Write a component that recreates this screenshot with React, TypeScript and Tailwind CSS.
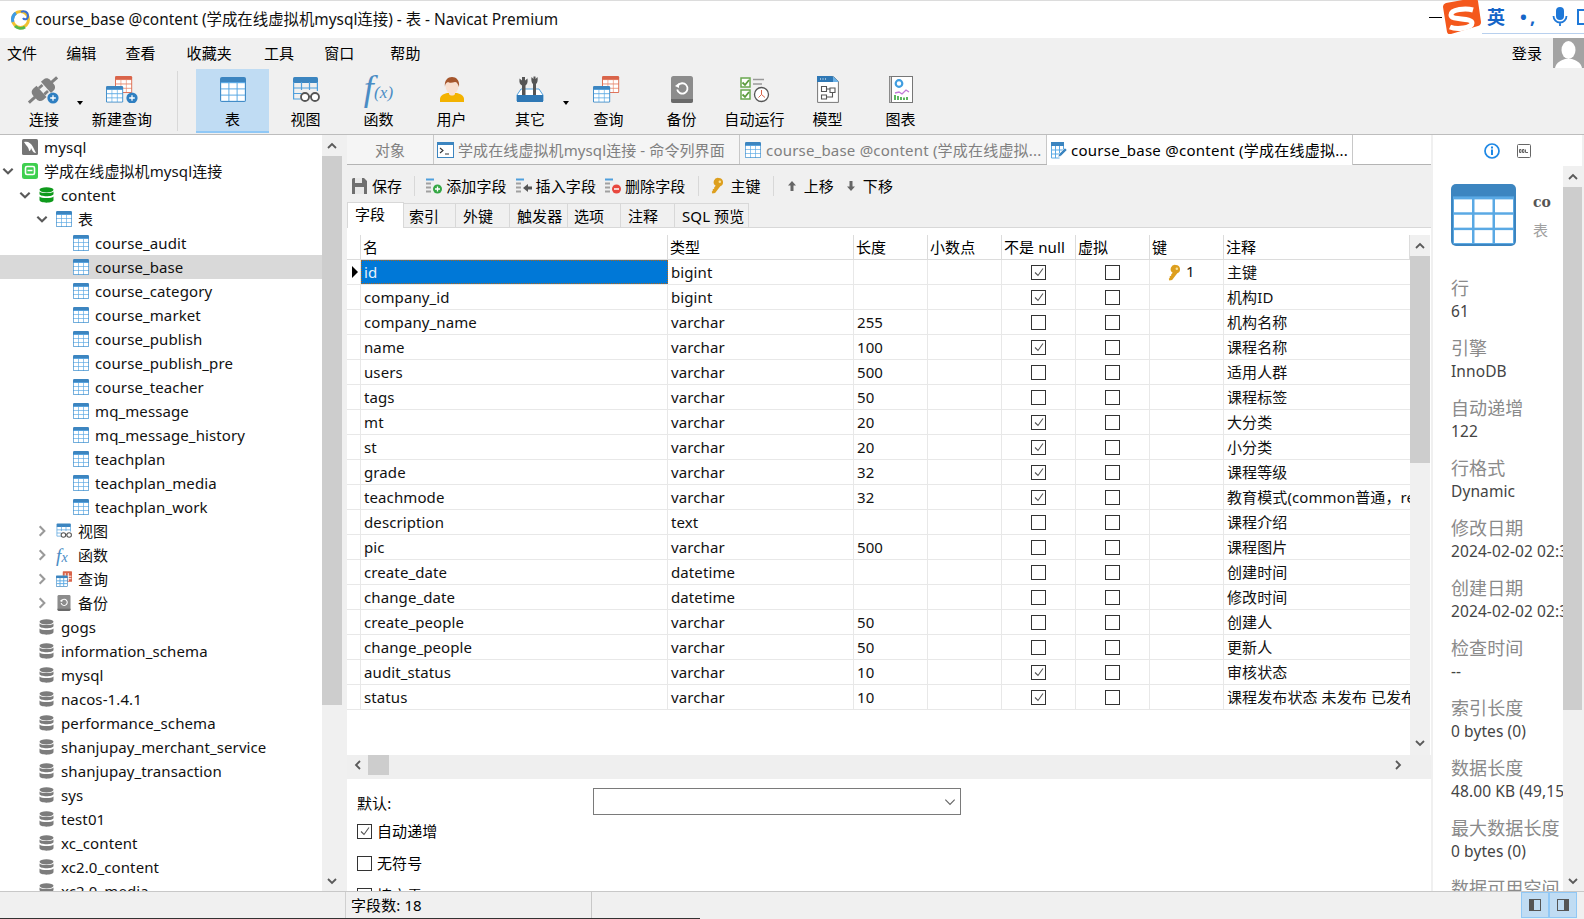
import type { ReactNode } from "react";

function TableIcon({ className = "w-4 h-4", main = "#3c85c0", line = "#5aa9e4" }: { className?: string; main?: string; line?: string }) {
	const xs = [1.2, 9.4, 17.6];
	const ys = [6.2, 12.4, 18.6];
	return (
		<svg viewBox="0 0 26 25" className={className} preserveAspectRatio="none">
			<rect x="0" y="0" width="26" height="25" rx="2" fill={main} />
			<rect x="0.8" y="5" width="24.4" height="19.2" fill={line} />
			{xs.map((x) =>
				ys.map((y) => <rect key={`${x}-${y}`} x={x} y={y} width="7.2" height="5.2" fill="#fff" />),
			)}
		</svg>
	);
}

function Plus({ cx, cy, r }: { cx: number; cy: number; r: number }) {
	return (
		<g>
			<circle cx={cx} cy={cy} r={r} fill="#2f7fc1" />
			<path d={`M${cx - r / 2} ${cy}H${cx + r / 2}M${cx} ${cy - r / 2}V${cy + r / 2}`} stroke="#fff" strokeWidth="1.3" />
		</g>
	);
}

function PlugIcon() {
	return (
		<svg width="34" height="28" viewBox="0 0 34 28">
			<g fill="#808080" transform="rotate(-42 16 14)">
				<rect x="-3" y="12.500" width="9" height="3" />
				<path d="M5 11c0-2.500 2-4.500 4.500-4.500H14v15H9.500C7 21.500 5 19.500 5 17z" />
				<rect x="14" y="8.500" width="5" height="2.800" />
				<rect x="14" y="16.700" width="5" height="2.800" />
				<path d="M20 6.500h3.500C26 6.500 28 8.500 28 11v6c0 2.500-2 4.500-4.500 4.500H20z" />
				<rect x="27" y="12.500" width="8" height="3" />
			</g>
			<Plus cx={26} cy={22} r={5.6} />
		</svg>
	);
}

function QueryIcon({ plus = false }: { plus?: boolean }) {
	return (
		<svg width="36" height="27" viewBox="0 0 36 27">
			<g transform="translate(11 0) scale(0.66 0.68)">
				<rect width="26" height="25" rx="2" fill="#d9644a" />
				<rect x="1" y="5" width="24" height="19" fill="#e88a70" />
				{[1.5, 9.5, 17.5].map((x) =>
					[6, 12.4, 18.6].map((y) => <rect key={`${x}-${y}`} x={x} y={y} width="7" height="5" fill="#fff" />),
				)}
			</g>
			<g transform="translate(2 10) scale(0.66 0.66)">
				<rect width="26" height="25" rx="2" fill="#3c85c0" />
				<rect x="1" y="5" width="24" height="19" fill="#5aa9e4" />
				{[1.5, 9.5, 17.5].map((x) =>
					[6, 12.4, 18.6].map((y) => <rect key={`${x}-${y}`} x={x} y={y} width="7" height="5" fill="#fff" />),
				)}
			</g>
			{plus && <Plus cx={28} cy={22} r={5.6} />}
		</svg>
	);
}

function ViewIcon({ className = "" }: { className?: string }) {
	return (
		<svg viewBox="0 0 28 26" className={className}>
			<rect x="1" y="0" width="25" height="6" rx="1.5" fill="#3c85c0" />
			<path d="M1.6 5v17h7M25.4 5v9M1.6 11h24M1.6 16.5h8M9.5 5v8M17.5 5v8" stroke="#4f9fdc" strokeWidth="1.2" fill="none" />
			<circle cx="13" cy="20" r="4" fill="#fff" stroke="#555" strokeWidth="1.8" />
			<circle cx="23" cy="20" r="4" fill="#fff" stroke="#555" strokeWidth="1.8" />
			<path d="M16.8 19.5h2.4" stroke="#555" strokeWidth="1.6" />
		</svg>
	);
}

function FxIcon() {
	return (
		<div className="h-[27px] flex items-end text-[#4a8cc4] font-['Liberation_Serif',serif] italic leading-none">
			<span className="text-[36px] leading-[30px]">f</span>
			<span className="text-[17px] mb-[2px]">(x)</span>
		</div>
	);
}

function UserIcon() {
	return (
		<svg width="26" height="27" viewBox="0 0 26 27">
			<path d="M1 26v-3c0-3 3-5 7-6h10c4 1 7 3 7 6v3z" fill="#f3b200" />
			<path d="M10 15h6v3c-1 2-5 2-6 0z" fill="#f8e0cf" />
			<ellipse cx="13" cy="10" rx="6.5" ry="8" fill="#f8dfcf" />
			<path d="M6 11C5 4 9 1 13 1s8 3 7 10c-1-3-2-5-4-5-3 1-6 1-7 0-2 1-3 2-3 5z" fill="#a5562c" />
		</svg>
	);
}

function ToolsIcon() {
	return (
		<svg width="28" height="27" viewBox="0 0 28 27">
			<path d="M1 25v-6l4-6h18l4 6v6z" fill="#fff" stroke="#4f9fdc" />
			<path d="M6 20V9.500C4 8.500 3 6.500 3.500 2.500L6 4.500V1h3v3.500l2.500-2C12 6.500 11 8.500 9.500 9.500V20z" fill="#555" />
			<path d="M17 20V8c-1.500-1-2-4-1.500-7l2 2V.5h2V3l2-2c.5 3 0 6-1.500 7v12z" fill="#555" />
			<rect x="1" y="19" width="26" height="7" fill="#2f78b5" />
		</svg>
	);
}

function BackupIcon({ className = "" }: { className?: string }) {
	return (
		<svg viewBox="0 0 22 27" className={className}>
			<rect width="22" height="27" rx="2.500" fill="#8c8c8c" />
			<path d="M0 23h22v1.500a2.500 2.500 0 0 1-2.500 2.500h-17A2.500 2.500 0 0 1 0 24.500z" fill="#6a6a6a" />
			<path d="M7 9.500a5.200 5.200 0 1 1-.8 4" fill="none" stroke="#fff" strokeWidth="1.800" />
			<path d="M4 10l4 -3v5z" fill="#fff" />
		</svg>
	);
}

function AutoRunIcon() {
	return (
		<svg width="30" height="27" viewBox="0 0 30 27">
			{[2, 14].map((y) => (
				<g key={y}>
					<rect x="1" y={y} width="9" height="9" fill="#fff" stroke="#6aa84f" strokeWidth="1.500" />
					<path d={`M2.500 ${y + 4.5}l2.500 2.500 4-5`} stroke="#5d9c3f" strokeWidth="1.800" fill="none" />
				</g>
			))}
			<path d="M13 3.500h11M13 8h9" stroke="#999" strokeWidth="1.600" />
			<circle cx="21.500" cy="18.500" r="7" fill="#fff" stroke="#555" strokeWidth="1.300" />
			<path d="M21.500 18.500V14M21.500 18.500l3.500 3M21.500 18.500l-3 3" stroke="#d9644a" strokeWidth="1" />
		</svg>
	);
}

function ModelIcon() {
	return (
		<svg width="22" height="27" viewBox="0 0 22 27">
			<path d="M.6.600h16l4.800 4.800v21H.6z" fill="#fff" stroke="#777" />
			<path d="M0 0h15l6 6H0z" fill="#2f78b5" />
			<path d="M16 0l6 6h-6z" fill="#6cb2e8" />
			<path d="M3 3h1M5.500 3h1M8 3h1" stroke="#fff" strokeWidth="1.200" />
			<path d="M4.500 10.500h5v5h-5zM13 12h5v4.500h-5zM4.500 19h5v4h-5zM9.500 13h3.500M9.500 21h6v-4.500" fill="none" stroke="#555" strokeWidth="1.100" />
		</svg>
	);
}

function ChartIcon() {
	return (
		<svg width="24" height="27" viewBox="0 0 24 27">
			<rect x=".5" y=".5" width="2.500" height="26" fill="#ccc" stroke="#777" strokeWidth=".8" />
			<rect x="2.500" y=".5" width="21" height="26" fill="#fff" stroke="#777" />
			<circle cx="10" cy="7.500" r="3.300" fill="none" stroke="#3f9de0" strokeWidth="2.200" />
			<path d="M6 17l4-1 3 2 4-4 3 2" fill="none" stroke="#c07ad8" strokeWidth="1.300" />
			<path d="M6 24v-5M9 24v-4M12 24v-3M15 24v-2.500M18 24v-3" stroke="#4caf50" strokeWidth="1.800" />
		</svg>
	);
}

function Caret({ className = "" }: { className?: string }) {
	return <span className={`absolute w-0 h-0 border-x-[3px] border-x-transparent border-t-[4px] border-t-black ${className}`} />;
}

function ToolButton({ label, icon, width = "w-[73px]", active = false, children }: { label: string; icon: ReactNode; width?: string; active?: boolean; children?: ReactNode }) {
	return (
		<div className={`relative flex flex-col items-center mt-px pt-[7px] h-[64px] shrink-0 ${width} ${active ? "bg-[#c0dcf3] border-b-2 border-[#90c8f6]" : ""}`}>
			<div className="h-[27px] flex items-center justify-center">{icon}</div>
			<div className="h-5 mt-[6px] leading-5 whitespace-nowrap text-black">{label}</div>
			{children}
		</div>
	);
}

function Chevron({ dir, className = "w-3 h-3", color = "#5a5a5a", weight = "1.800" }: { dir: "up" | "down" | "left" | "right"; className?: string; color?: string; weight?: string }) {
	const d = {
		up: "M2 8l4-4 4 4",
		down: "M2 4l4 4 4-4",
		left: "M8 2L4 6l4 4",
		right: "M4 2l4 4-4 4",
	}[dir];
	return (
		<svg viewBox="0 0 12 12" className={className}>
			<path d={d} fill="none" stroke={color} strokeWidth={weight} />
		</svg>
	);
}

function VScroll({ thumb, width = "w-5", bottom = "h-[21px]" }: { thumb: string; width?: string; bottom?: string }) {
	return (
		<div className={`flex flex-col shrink-0 bg-[#f0f0f0] ${width}`}>
			<div className="h-[21px] flex items-center justify-center shrink-0">
				<Chevron dir="up" />
			</div>
			<div className={`bg-[#cdcdcd] shrink-0 ${thumb}`} />
			<div className="flex-1" />
			<div className={`flex items-center justify-center shrink-0 ${bottom}`}>
				<Chevron dir="down" />
			</div>
		</div>
	);
}

function DbIcon({ color = "#7c7c7c" }: { color?: string }) {
	return (
		<svg width="15" height="16" viewBox="0 0 15 16">
			<ellipse cx="7.500" cy="2.800" rx="7" ry="2.600" fill={color} />
			<path d="M.5 4.500c1.500 2 12.500 2 14 0v2.500c0 3-14 3-14 0z" fill={color} />
			<path d="M.5 9.500c1.500 2 12.500 2 14 0V13c0 3.500-14 3.500-14 0z" fill={color} />
		</svg>
	);
}

function TreeRow({ level, open, icon, label, selected = false }: { level: 0 | 1 | 2 | 3; open?: boolean; icon: ReactNode; label: string; selected?: boolean }) {
	const indent = ["pl-0", "pl-[17px]", "pl-[34px]", "pl-[51px]"][level];
	return (
		<div className={`h-6 shrink-0 flex items-center whitespace-nowrap ${indent} ${selected ? "bg-[#d9d9d9]" : ""}`}>
			<div className="w-4 flex justify-center shrink-0">
				{open === true && <Chevron dir="down" className="w-[14px] h-[14px]" />}
				{open === false && <Chevron dir="right" className="w-[14px] h-[14px]" color="#9a9a9a" />}
			</div>
			<div className="w-[22px] ml-[6px] shrink-0 flex items-center">{icon}</div>
			<span className="text-[#111]">{label}</span>
		</div>
	);
}

const tableNames = ["course_audit", "course_base", "course_category", "course_market", "course_publish", "course_publish_pre", "course_teacher", "mq_message", "mq_message_history", "teachplan", "teachplan_media", "teachplan_work"];
const databases = ["gogs", "information_schema", "mysql", "nacos-1.4.1", "performance_schema", "shanjupay_merchant_service", "shanjupay_transaction", "sys", "test01", "xc_content", "xc2.0_content", "xc2.0_media"];

function Tree() {
	return (
		<div className="flex w-[342px] shrink-0 bg-white">
			<div className="w-[322px] flex flex-col overflow-hidden">
				<TreeRow
					level={0}
					label="mysql"
					icon={
						<svg width="16" height="16" viewBox="0 0 16 16">
							<rect width="16" height="16" rx="1.500" fill="#757575" />
							<path d="M2 3c4-1 7 1 9 5l3 6c-2 0-3-1-4-3L9 9c0 2-1 3-2 3 0-2-1-4-3-6z" fill="#fff" />
						</svg>
					}
				/>
				<TreeRow
					level={0}
					open
					label="学成在线虚拟机mysql连接"
					icon={
						<svg width="16" height="16" viewBox="0 0 16 16">
							<rect width="16" height="16" rx="2.500" fill="#3ecf4f" />
							<rect x="3.500" y="3.500" width="9" height="8" rx="1.500" fill="none" stroke="#fff" strokeWidth="1.600" />
							<path d="M5.500 7.500h5" stroke="#fff" strokeWidth="1.500" />
						</svg>
					}
				/>
				<TreeRow level={1} open label="content" icon={<DbIcon color="#0f9a1c" />} />
				<TreeRow level={2} open label="表" icon={<TableIcon />} />
				{tableNames.map((name) => (
					<TreeRow key={name} level={3} label={name} icon={<TableIcon />} selected={name === "course_base"} />
				))}
				<TreeRow level={2} open={false} label="视图" icon={<ViewIcon className="w-4 h-4" />} />
				<TreeRow
					level={2}
					open={false}
					label="函数"
					icon={
						<span className="text-[#4a8cc4] font-['Liberation_Serif',serif] italic text-[19px] leading-none">
							f<span className="text-[14px]">x</span>
						</span>
					}
				/>
				<TreeRow
					level={2}
					open={false}
					label="查询"
					icon={
						<span className="w-4 h-4 flex">
							<svg viewBox="0 0 26 25" className="w-4 h-4">
								<rect x="11" y="0" width="15" height="17" rx="1" fill="#d9644a" />
								<path d="M15 3v13M20 3v13M12 8h13M12 12h13" stroke="#fff" strokeWidth="1.500" />
								<rect x="0" y="7" width="19" height="18" rx="1" fill="#3c85c0" />
								<rect x="1" y="11" width="17" height="13" fill="#fff" />
								<path d="M6.500 11v13M12.500 11v13M1 15.500h17M1 20h17" stroke="#5aa9e4" strokeWidth="1.500" />
							</svg>
						</span>
					}
				/>
				<TreeRow level={2} open={false} label="备份" icon={<BackupIcon className="w-[14px] h-4 ml-px" />} />
				{databases.map((name, i) => (
					<TreeRow key={name + i} level={1} label={name} icon={<DbIcon />} />
				))}
			</div>
			<VScroll thumb="h-[549px]" />
		</div>
	);
}

function FieldLines({ children }: { children: ReactNode }) {
	return (
		<svg width="17" height="16" viewBox="0 0 17 16">
			<path d="M0 1.500h8" stroke="#4f9fdc" strokeWidth="2" />
			<path d="M0 5.500h5M0 9.500h5M0 13.500h5" stroke="#a0a0a0" strokeWidth="2" />
			{children}
		</svg>
	);
}

function KeyIcon({ className = "" }: { className?: string }) {
	return (
		<svg viewBox="0 0 14 18" className={className}>
			<path d="M9 1a4.500 4.500 0 0 1 1.500 8.700L5 17l-3 .5-.5-2 1-1 0-1.500 1.500-.5 0-1.500 1.600-1.800A4.500 4.500 0 0 1 9 1z" fill="#dd9f1e" />
			<circle cx="10" cy="5" r="1.300" fill="#fbe39a" />
		</svg>
	);
}

function ToolbarItem({ icon, label, className = "" }: { icon: ReactNode; label: string; className?: string }) {
	return (
		<div className={`flex items-center shrink-0 ${className}`}>
			{icon}
			<span className="text-black">{label}</span>
		</div>
	);
}

function Arrow({ up }: { up?: boolean }) {
	return (
		<svg width="12" height="12" viewBox="0 0 12 12" className={up ? "" : "rotate-180"}>
			<path d="M6 1l4 4.500H7.500V11h-3V5.500H2z" fill="#666" />
		</svg>
	);
}

function FieldToolbar() {
	return (
		<div className="h-[37px] shrink-0 flex items-center pt-[4px] bg-[#f0f0f0]">
			<ToolbarItem
				className="ml-[5px]"
				label="保存"
				icon={
					<svg width="15" height="16" viewBox="0 0 15 16" className="mr-[5px]">
						<path d="M0 1.500A1.500 1.500 0 0 1 1.500 0H12l3 3v13H0z" fill="#6f6f6f" />
						<rect x="3" y="0" width="7" height="5" fill="#e8e8e8" />
						<rect x="3" y="9" width="9" height="7" fill="#e8e8e8" />
					</svg>
				}
			/>
			<div className="w-px h-[20px] bg-[#d8d8d8] ml-[12px]" />
			<ToolbarItem
				className="ml-[11px]"
				label="添加字段"
				icon={
					<span className="mr-[3px] flex">
						<FieldLines>
							<circle cx="11.500" cy="11" r="4.500" fill="#35a845" />
							<path d="M9 11h5M11.500 8.500v5" stroke="#fff" strokeWidth="1.300" />
						</FieldLines>
					</span>
				}
			/>
			<ToolbarItem
				className="ml-[9px]"
				label="插入字段"
				icon={
					<span className="mr-[3px] flex">
						<FieldLines>
							<path d="M7 10l5-4v2.500h4v3h-4V14z" fill="#555" />
						</FieldLines>
					</span>
				}
			/>
			<ToolbarItem
				className="ml-[9px]"
				label="删除字段"
				icon={
					<span className="mr-[3px] flex">
						<FieldLines>
							<circle cx="11.500" cy="11" r="4.500" fill="#e8483f" />
							<path d="M9 11h5" stroke="#fff" strokeWidth="1.500" />
						</FieldLines>
					</span>
				}
			/>
			<div className="w-px h-[20px] bg-[#d8d8d8] ml-[13px]" />
			<ToolbarItem className="ml-[11px]" label="主键" icon={<KeyIcon className="w-[14px] h-[17px] mr-[6px]" />} />
			<div className="w-px h-[20px] bg-[#d8d8d8] ml-[12px]" />
			<ToolbarItem
				className="ml-[12px]"
				label="上移"
				icon={
					<span className="mr-[6px] flex">
						<Arrow up />
					</span>
				}
			/>
			<ToolbarItem
				className="ml-[11px]"
				label="下移"
				icon={
					<span className="mr-[6px] flex">
						<Arrow />
					</span>
				}
			/>
		</div>
	);
}

const subTabs = [
	{ label: "索引", cls: "w-[52px] pl-[5px]" },
	{ label: "外键", cls: "w-[54px] pl-[7px]" },
	{ label: "触发器", cls: "w-[58px] pl-[7px]" },
	{ label: "选项", cls: "w-[53px] pl-[6px]" },
	{ label: "注释", cls: "w-[54px] pl-[7px]" },
	{ label: "SQL 预览", cls: "w-[74px] pl-[7px]" },
];

type Field = { name: string; type: string; len?: string; notNull?: boolean; key?: boolean; note: string };

const fields: Field[] = [
	{ name: "id", type: "bigint", notNull: true, key: true, note: "主键" },
	{ name: "company_id", type: "bigint", notNull: true, note: "机构ID" },
	{ name: "company_name", type: "varchar", len: "255", note: "机构名称" },
	{ name: "name", type: "varchar", len: "100", notNull: true, note: "课程名称" },
	{ name: "users", type: "varchar", len: "500", note: "适用人群" },
	{ name: "tags", type: "varchar", len: "50", note: "课程标签" },
	{ name: "mt", type: "varchar", len: "20", notNull: true, note: "大分类" },
	{ name: "st", type: "varchar", len: "20", notNull: true, note: "小分类" },
	{ name: "grade", type: "varchar", len: "32", notNull: true, note: "课程等级" },
	{ name: "teachmode", type: "varchar", len: "32", notNull: true, note: "教育模式(common普通，record录播，live直播等)" },
	{ name: "description", type: "text", note: "课程介绍" },
	{ name: "pic", type: "varchar", len: "500", note: "课程图片" },
	{ name: "create_date", type: "datetime", note: "创建时间" },
	{ name: "change_date", type: "datetime", note: "修改时间" },
	{ name: "create_people", type: "varchar", len: "50", note: "创建人" },
	{ name: "change_people", type: "varchar", len: "50", note: "更新人" },
	{ name: "audit_status", type: "varchar", len: "10", notNull: true, note: "审核状态" },
	{ name: "status", type: "varchar", len: "10", notNull: true, note: "课程发布状态 未发布  已发布  下线" },
];

const gridCols = "grid grid-cols-[14px_307px_186px_74px_74px_74px_74px_74px_186px]";
const headers = ["", "名", "类型", "长度", "小数点", "不是 null", "虚拟", "键", "注释"];

function CheckBox({ checked, className = "" }: { checked?: boolean; className?: string }) {
	return (
		<span className={`w-[15px] h-[15px] border border-[#333] bg-white flex items-center justify-center shrink-0 ${className}`}>
			{checked && (
				<svg viewBox="0 0 12 12" className="w-3 h-3">
					<path d="M2 6.500l3 3 5-7" fill="none" stroke="#555" strokeWidth="1.100" />
				</svg>
			)}
		</span>
	);
}

function Cell({ children, className = "" }: { children?: ReactNode; className?: string }) {
	return <div className={`h-[24px] border-r border-[#e8e8e8] overflow-hidden whitespace-nowrap flex items-center pl-[3px] text-[#111] ${className}`}>{children}</div>;
}

function FieldGrid() {
	return (
		<div className="w-[1063px] bg-white overflow-hidden pt-[7px]">
			<div className={`${gridCols} h-[25px] border-b border-[#dcdcdc]`}>
				{headers.map((h, i) => (
					<div key={i} className="h-[24px] border-r border-[#dcdcdc] flex items-center pl-[2px] text-black whitespace-nowrap overflow-hidden">
						{h}
					</div>
				))}
			</div>
			{fields.map((f, i) => (
				<div key={f.name} className={`${gridCols} h-[25px] border-b border-[#e8e8e8]`}>
					<Cell className="!pl-[5px]">{i === 0 && <span className="w-0 h-0 border-y-[6px] border-y-transparent border-l-[6px] border-l-black" />}</Cell>
					{i === 0 ? (
						<div className="h-[24px] bg-[#0078d7] border border-dotted border-[#b0661a] text-[#e8f2fb] flex items-center pl-[2px]">id</div>
					) : (
						<Cell>{f.name}</Cell>
					)}
					<Cell>{f.type}</Cell>
					<Cell>{f.len}</Cell>
					<Cell />
					<Cell className="justify-center !pl-0">
						<CheckBox checked={f.notNull} />
					</Cell>
					<Cell className="justify-center !pl-0">
						<CheckBox />
					</Cell>
					<Cell className="!pl-[17px]">
						{f.key && (
							<>
								<KeyIcon className="w-[14px] h-[17px]" />
								<span className="ml-[5px] -mt-[3px]">1</span>
							</>
						)}
					</Cell>
					<Cell className="!border-r-0">{f.note}</Cell>
				</div>
			))}
		</div>
	);
}

function CenterTabs() {
	return (
		<div className="h-[30px] shrink-0 flex bg-white border-b border-[#b4b4b4]">
			<div className="w-[87px] bg-[#f5f5f5] border-r border-[#c8c8c8] text-[#808080] flex items-center justify-center">对象</div>
			<div className="w-[306px] bg-[#f5f5f5] border-r border-[#c8c8c8] text-[#808080] flex items-center pl-[3px] whitespace-nowrap overflow-hidden">
				<svg width="17" height="16" viewBox="0 0 17 16" className="mr-[4px] shrink-0">
					<rect x=".5" y=".5" width="16" height="15" fill="#fff" stroke="#3c85c0" />
					<rect x="0" y="0" width="17" height="3" fill="#3c85c0" />
					<path d="M3 6l3 2.500L3 11M8 12h4" fill="none" stroke="#333" strokeWidth="1.100" />
				</svg>
				学成在线虚拟机mysql连接 - 命令列界面
			</div>
			<div className="w-[307px] bg-[#f5f5f5] border-r border-[#c8c8c8] text-[#808080] flex items-center pl-[5px] whitespace-nowrap overflow-hidden tracking-[0.2px]">
				<TableIcon className="w-4 h-4 mr-[5px] shrink-0" />
				course_base @content (学成在线虚拟...
			</div>
			<div className="w-[306px] bg-white border-r border-[#c8c8c8] text-black flex items-center pl-[4px] whitespace-nowrap overflow-hidden -mb-px tracking-[0.25px]">
				<svg width="16" height="17" viewBox="0 0 16 17" className="mr-[4px] shrink-0">
					<rect x="0" y="0" width="13" height="4" fill="#3c85c0" />
					<path d="M.5 4v12h8M12.500 4v4M.5 8h12M.5 12h8M4.500 4v12M8.500 4v8" stroke="#5aa9e4" fill="none" />
					<path d="M7 15l1-3 6-6 2 2-6 6z" fill="#3c85c0" stroke="#fff" strokeWidth=".5" />
				</svg>
				course_base @content (学成在线虚拟...
			</div>
		</div>
	);
}

const formChecks = [
	{ label: "自动递增", on: true, cls: "mt-[8px]" },
	{ label: "无符号", on: false, cls: "mt-[16px]" },
	{ label: "填充零", on: false, cls: "mt-[16px]" },
];

function Center() {
	return (
		<div className="w-[1084px] shrink-0 ml-[5px] flex flex-col overflow-hidden">
			<CenterTabs />
			<FieldToolbar />
			<div className="h-[26px] shrink-0 flex border-b border-[#d8d8d8] items-end">
				<div className="w-[57px] h-[26px] -mb-px bg-white border border-b-0 border-[#d8d8d8] pl-[7px] pb-[3px] flex items-center text-black">字段</div>
				{subTabs.map((t) => (
					<div key={t.label} className={`h-[24px] bg-[#f0f0f0] border-r border-t border-[#d8d8d8] flex items-center text-black whitespace-nowrap ${t.cls}`}>
						{t.label}
					</div>
				))}
			</div>
			<div className="flex h-[527px] shrink-0 bg-white">
				<FieldGrid />
				<div className="mt-[7px] flex">
					<VScroll thumb="h-[207px]" bottom="h-[24px]" />
				</div>
			</div>
			<div className="h-6 shrink-0 bg-[#efefef] flex items-start">
				<div className="w-[21px] h-5 flex items-center justify-center">
					<Chevron dir="left" />
				</div>
				<div className="w-[21px] h-5 bg-[#cdcdcd]" />
				<div className="flex-1 flex justify-end pr-[27px] h-5 items-center">
					<Chevron dir="right" />
				</div>
			</div>
			<div className="flex-1 min-h-0 bg-white overflow-hidden pt-[9px] pl-[10px]">
				<div className="flex items-center h-[27px]">
					<span className="w-[236px] text-black mt-[2px]">默认:</span>
					<div className="w-[368px] h-[27px] border border-[#7a7a7a] flex items-center justify-end pr-[3px]">
						<Chevron dir="down" className="w-[14px] h-[14px]" color="#666" weight="1" />
					</div>
				</div>
				{formChecks.map((c) => (
					<div key={c.label} className={`flex items-center h-[16px] text-black ${c.cls}`}>
						<CheckBox checked={c.on} className="mr-[5px]" />
						{c.label}
					</div>
				))}
			</div>
		</div>
	);
}

const info = [
	["行", "61"],
	["引擎", "InnoDB"],
	["自动递增", "122"],
	["行格式", "Dynamic"],
	["修改日期", "2024-02-02 02:30:57"],
	["创建日期", "2024-02-02 02:30:57"],
	["检查时间", "--"],
	["索引长度", "0 bytes (0)"],
	["数据长度", "48.00 KB (49,152)"],
	["最大数据长度", "0 bytes (0)"],
	["数据可用空间", "0 bytes (0)"],
];

function RightPanel() {
	return (
		<div className="ml-[2px] w-[149px] shrink-0 flex flex-col bg-white">
			<div className="h-[31px] shrink-0 flex items-center">
				<svg width="16" height="16" viewBox="0 0 16 16" className="ml-[51px]">
					<circle cx="8" cy="8" r="7" fill="none" stroke="#1e88e5" strokeWidth="1.700" />
					<rect x="7" y="6.500" width="2" height="5.500" fill="#1e88e5" />
					<rect x="7" y="3.500" width="2" height="2" fill="#1e88e5" />
				</svg>
				<svg width="14" height="14" viewBox="0 0 14 14" className="ml-[17px]">
					<rect x=".5" y=".5" width="13" height="13" rx="1" fill="#fff" stroke="#666" />
					<path d="M2.500 5.500v3h1.500v-3zM5.500 5.500v3H7v-3zM8.500 5.500v3H11" fill="none" stroke="#555" strokeWidth=".9" />
				</svg>
			</div>
			<div className="flex flex-1 min-h-0">
				<div className="w-[130px] overflow-hidden pl-[18px]">
					<div className="flex mt-[18px] h-[62px] w-[200px]">
						<TableIcon className="w-[65px] h-[62px] shrink-0" />
						<div className="ml-[17px]">
							<div className="font-['DejaVu_Serif',serif] font-bold text-[14px] text-[#555] leading-5 mt-[8px]">co</div>
							<div className="text-[#a0a0a0] leading-5 mt-[8px]">表</div>
						</div>
					</div>
					<div className="mt-[30px] w-[200px]">
						{info.map(([k, v]) => (
							<div key={k} className="h-[60px]">
								<div className="h-6 leading-6 text-[18px] text-[#8a8a8a]">{k}</div>
								<div className="h-5 mt-px leading-5 text-[15.5px] text-[#444]">{v}</div>
							</div>
						))}
					</div>
				</div>
				<VScroll thumb="h-[523px]" width="w-[19px]" />
			</div>
		</div>
	);
}

function StatusBar() {
	return (
		<>
			<div className="h-[27px] shrink-0 flex border-t border-[#c8c8c8] bg-[#f0f0f0]">
				<div className="w-[346px] border-r border-[#d0d0d0]" />
				<div className="w-[246px] border-r border-[#c8c8c8] pl-[5px] flex items-center text-black">字段数: 18</div>
				<div className="ml-auto flex mr-[7px]">
					{["left", "right"].map((side) => (
						<div key={side} className="w-[28px] h-[26px] bg-[#c0dcf3] border border-[#90c8f6] flex items-center justify-center">
							<span className="w-[12px] h-[12px] border border-[#555] flex">
								<span className={`w-[4px] h-full bg-[#555] ${side === "right" ? "ml-auto" : ""}`} />
							</span>
						</div>
					))}
				</div>
			</div>
			<div className="h-px w-[700px] shrink-0 bg-[#333]" />
		</>
	);
}

const menus = [
	{ label: "文件", cls: "ml-[7px]" },
	{ label: "编辑", cls: "ml-[29px]" },
	{ label: "查看", cls: "ml-[29px]" },
	{ label: "收藏夹", cls: "ml-[31px]" },
	{ label: "工具", cls: "ml-[32px]" },
	{ label: "窗口", cls: "ml-[30px]" },
	{ label: "帮助", cls: "ml-[36px]" },
];

export default function App() {
	return (
		<div className="w-[1584px] h-[919px] overflow-hidden flex flex-col bg-[#f0f0f0] text-[15px] leading-5 tracking-[0.1px] font-['Noto_Sans','Noto_Sans_CJK_SC',sans-serif]">
			<div className="relative h-[38px] shrink-0 bg-white flex items-center pl-[10px] border-t border-[#dcdcdc]">
				<svg width="21" height="21" viewBox="0 0 21 21" className="shrink-0">
					<circle cx="10.500" cy="10.500" r="8" fill="none" stroke="#f2c230" strokeWidth="3" />
					<path d="M3 13a8 8 0 0 1 3-9" fill="none" stroke="#3c9be8" strokeWidth="3" />
					<path d="M5 17a8 8 0 0 0 10 1" fill="none" stroke="#58b947" strokeWidth="3" />
					<path d="M11 3c3-2 7 0 7 4s-4 4-5 2" fill="none" stroke="#3c6fd0" strokeWidth="2" />
				</svg>
				<span className="ml-[4px] text-[15.4px] tracking-normal text-[#111] whitespace-nowrap">course_base @content (学成在线虚拟机mysql连接) - 表 - Navicat Premium</span>
				<div className="ml-auto h-[33px] self-start flex items-center">
					<span className="w-[13px] h-px bg-black" />
					<svg width="40" height="34" viewBox="0 0 40 34" className="shrink-0 -mt-px">
						<path d="M1 7Q1 4 4 3L32-2Q35-2 36 1L39 22Q39 25 36 26L9 34Q6 35 5 32Z" fill="#f4581c" />
						<path d="M31 10C24 8 9 9 9 15 9 21 30 17 30 23 30 28 15 30 8 27" fill="none" stroke="#fff" strokeWidth="5" />
					</svg>
					<div className="w-[102px] h-[33px] border-b border-[#b8d0ee] flex items-center text-[#1565c8] overflow-hidden">
						<span className="ml-[5px] text-[18px] font-bold">英</span>
						<span className="ml-[15px] text-[18px] font-bold leading-none tracking-[3px]">•,</span>
						<svg width="16" height="22" viewBox="0 0 16 22" className="ml-[14px] shrink-0">
							<rect x="4" y="1" width="8" height="13" rx="4" fill="#1e78d8" />
							<path d="M1.500 10a6.500 6.500 0 0 0 13 0M8 17v3" fill="none" stroke="#1e78d8" strokeWidth="1.800" />
						</svg>
						<span className="ml-[9px] w-[10px] h-[16px] border-2 border-[#1e78d8] shrink-0" />
					</div>
				</div>
			</div>
			<div className="h-[30px] shrink-0 flex items-center">
				{menus.map((m) => (
					<span key={m.label} className={`text-black ${m.cls}`}>
						{m.label}
					</span>
				))}
				<span className="ml-auto text-black">登录</span>
				<div className="ml-[11px] w-[31px] h-[30px] bg-[#a3a3a3] overflow-hidden flex justify-center">
					<svg width="31" height="30" viewBox="0 0 31 30">
						<ellipse cx="15.500" cy="12" rx="7" ry="9" fill="#fff" />
						<path d="M2 30c1-6 7-8 10-9h7c3 1 9 3 10 9z" fill="#fff" />
					</svg>
				</div>
			</div>
			<div className="h-[67px] shrink-0 flex items-start pl-[8px] border-b border-[#bdbdbd]">
				<ToolButton label="连接" icon={<PlugIcon />} width="w-[72px]">
					<Caret className="right-[-3px] top-[32px]" />
				</ToolButton>
				<ToolButton label="新建查询" icon={<QueryIcon plus />} width="w-[84px]" />
				<div className="w-px h-[60px] mt-[3px] ml-[13px] bg-[#d8d8d8]" />
				<div className="ml-[18px]" />
				<ToolButton label="表" active icon={<TableIcon className="w-[26px] h-[25px]" />} />
				<ToolButton label="视图" icon={<ViewIcon className="w-[28px] h-[26px]" />} />
				<ToolButton label="函数" icon={<FxIcon />} />
				<ToolButton label="用户" icon={<UserIcon />} />
				<ToolButton label="其它" icon={<ToolsIcon />} width="w-[84px]">
					<Caret className="right-[3px] top-[32px]" />
				</ToolButton>
				<ToolButton label="查询" icon={<QueryIcon />} />
				<ToolButton label="备份" icon={<BackupIcon className="w-[22px] h-[27px]" />} />
				<ToolButton label="自动运行" icon={<AutoRunIcon />} />
				<ToolButton label="模型" icon={<ModelIcon />} />
				<ToolButton label="图表" icon={<ChartIcon />} />
			</div>
			<div className="flex-1 min-h-0 flex">
				<Tree />
				<Center />
				<RightPanel />
			</div>
			<StatusBar />
		</div>
	);
}
